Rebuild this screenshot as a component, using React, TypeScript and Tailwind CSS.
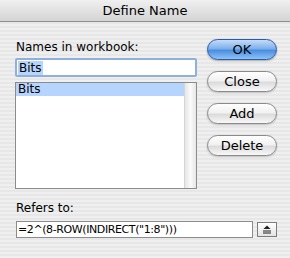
import React from "react";

const font = { fontFamily: '"DejaVu Sans", "Lucida Grande", sans-serif' };

function PillButton({ label, primary }: { label: string; primary?: boolean }) {
  if (primary) {
    return (
      <div className="h-[21px] w-[70px] rounded-full border border-[#2b5aa8] bg-[linear-gradient(to_bottom,#c4dcf7_0%,#7fb0ec_45%,#4a8ee0_55%,#8ec2f5_100%)] flex items-center justify-center text-[13px] text-black shadow-[0_1px_2px_rgba(0,0,0,0.3)]">
        {label}
      </div>
    );
  }
  return (
    <div className="h-[21px] w-[70px] rounded-full border border-[#8a8a8a] bg-[linear-gradient(to_bottom,#ffffff_0%,#f1f1f1_45%,#dcdcdc_55%,#f8f8f8_100%)] flex items-center justify-center text-[13px] text-black shadow-[0_1px_2px_rgba(0,0,0,0.2)]">
      {label}
    </div>
  );
}

export default function App() {
  return (
    <div
      className="w-[290px] h-[258px] flex flex-col overflow-hidden bg-[repeating-linear-gradient(to_bottom,#efefef_0px,#efefef_2px,#e7e7e7_2px,#e7e7e7_4px)] text-black"
      style={font}
    >
      <div className="h-[22px] shrink-0 flex items-center justify-center border-b border-[#8e8e8e] bg-[linear-gradient(to_bottom,#f0f0f0,#d4d4d4)] text-[13px]">
        Define Name
      </div>
      <div className="flex pl-[15px] pt-[18px]">
        <div className="w-[182px] flex flex-col">
          <div className="text-[12px] leading-[15px] pl-[1px]">Names in workbook:</div>
          <div className="mt-[3px] h-[19px] border-2 border-[#8fb0d9] rounded-[2px] bg-white flex items-center px-[1px]">
            <span className="text-[12px] leading-[14px] bg-[#b5d5ff] px-[1px]">Bits</span>
          </div>
          <div className="mt-[5px] h-[107px] border border-[#8c8c8c] bg-white flex">
            <div className="flex-1 flex flex-col">
              <div className="h-[13px] bg-[#b5d5ff] text-[12px] leading-[13px] pl-[2px]">Bits</div>
            </div>
            <div className="w-[12px] border-l border-[#d6d6d6] bg-[linear-gradient(to_right,#e6e6e6,#fafafa_50%,#e6e6e6)]" />
          </div>
        </div>
        <div className="ml-[10px] -mt-[1px] flex flex-col gap-[11px]">
          <PillButton label="OK" primary />
          <PillButton label="Close" />
          <PillButton label="Add" />
          <PillButton label="Delete" />
        </div>
      </div>
      <div className="pl-[16px] pt-[12px]">
        <div className="text-[12px] leading-[15px]">Refers to:</div>
        <div className="mt-[5px] flex items-center">
          <div className="w-[237px] h-[17px] border border-[#8c8c8c] bg-white text-[11px] tracking-[-0.4px] leading-[15px] pl-[1px] whitespace-nowrap overflow-hidden">
            =2^(8-ROW(INDIRECT("1:8")))
          </div>
          <div className="ml-[4px] w-[20px] h-[15px] border border-[#7c7c7c] bg-[linear-gradient(to_bottom,#ffffff,#e4e4e4)] flex items-center justify-center">
            <svg width="10" height="9" viewBox="0 0 10 9">
              <path d="M5 0.5 L8.5 4 L1.5 4 Z" fill="#222" />
              <rect x="1" y="5.5" width="8" height="1" fill="#222" />
              <rect x="1" y="7.5" width="8" height="1" fill="#222" />
            </svg>
          </div>
        </div>
      </div>
    </div>
  );
}
